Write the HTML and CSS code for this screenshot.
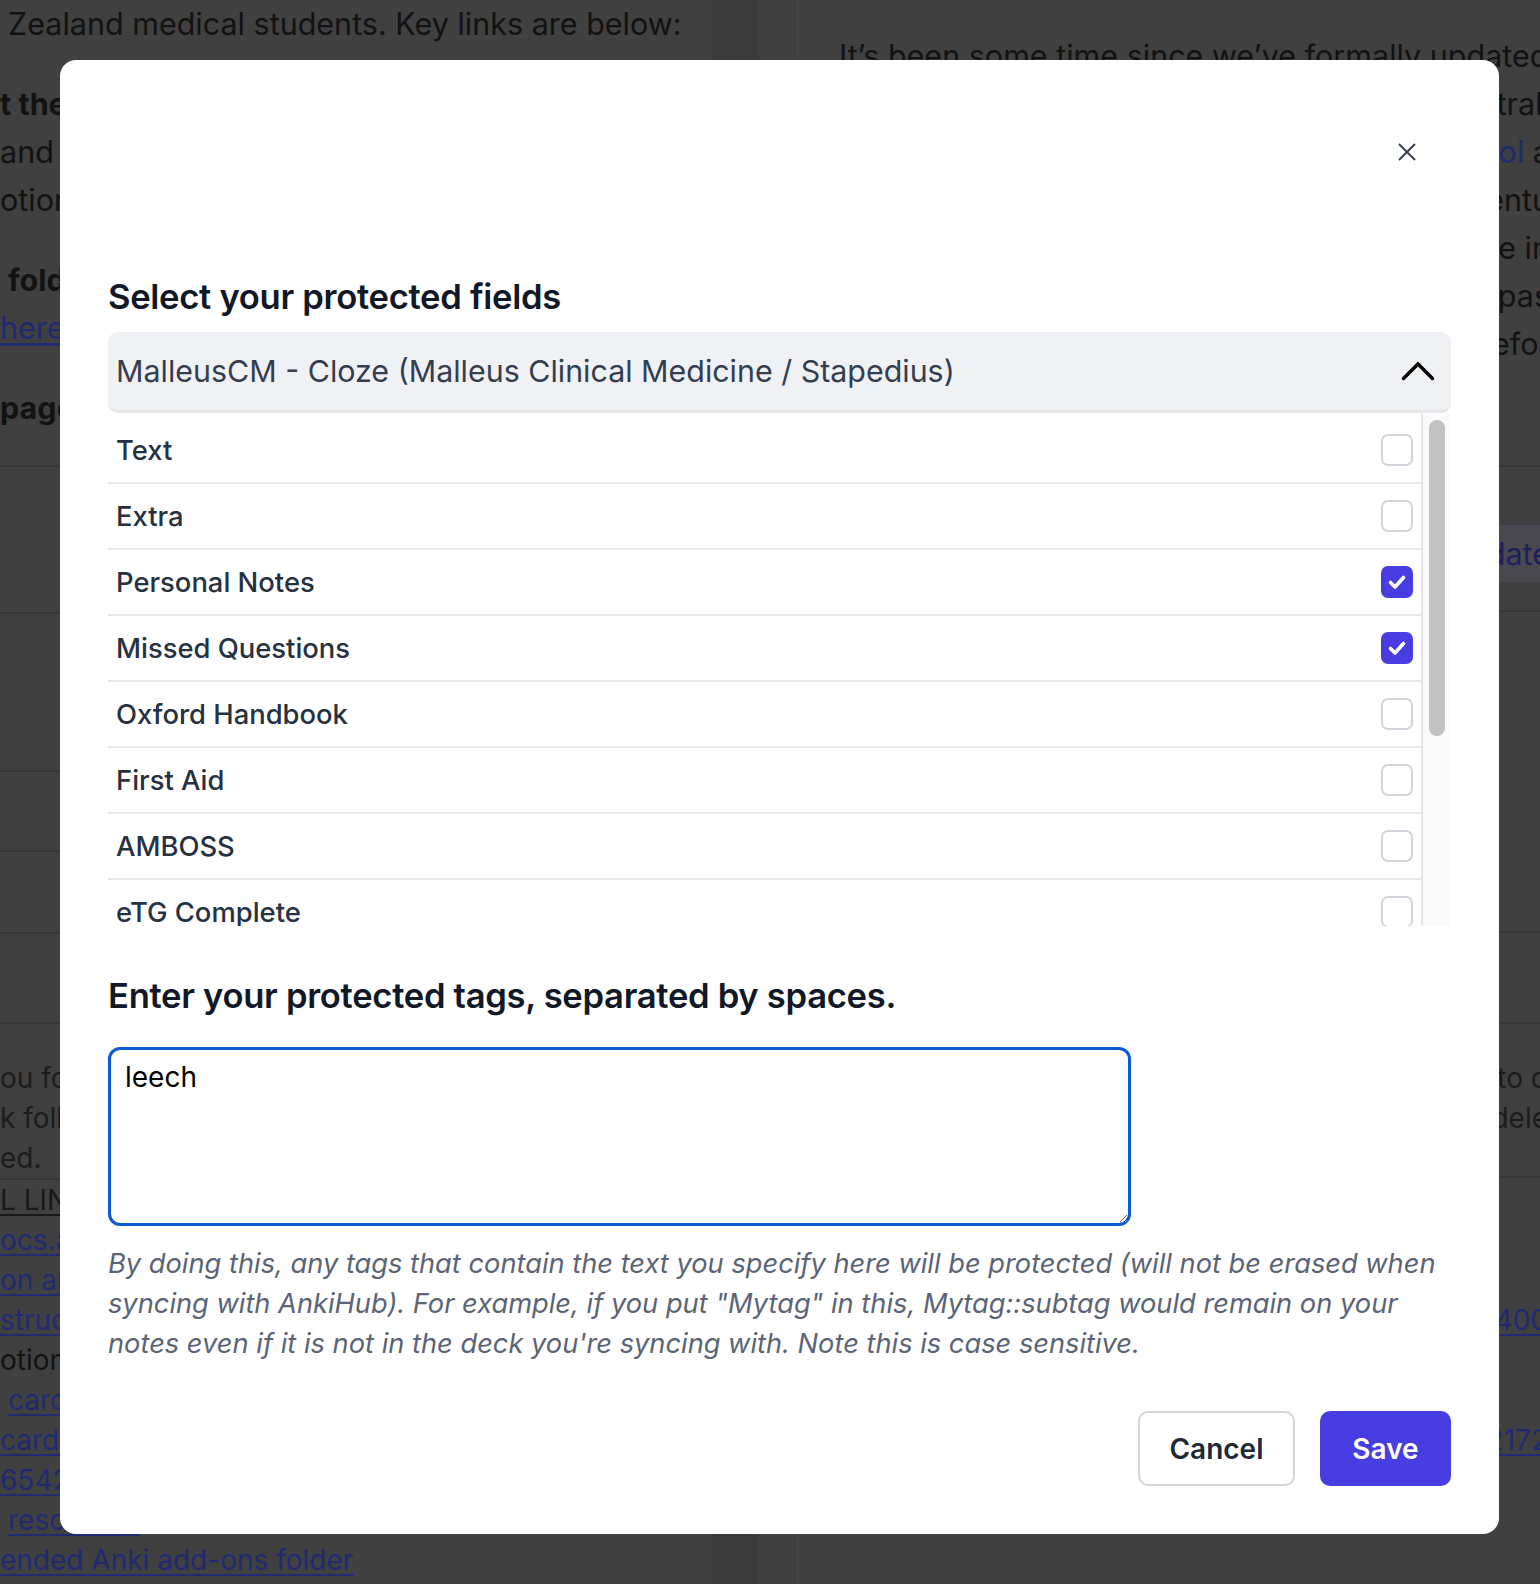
FILE: index.html
```html
<!DOCTYPE html>
<html lang="en">
<head>
    <meta charset="UTF-8">
    <meta name="viewport" content="width=device-width, initial-scale=1.0">
    <title>AnkiHub - Protected fields</title>
    <link rel="stylesheet" href="styles.css">
</head>
<body>

<!-- page behind the dialog (dimmed) -->
<div class="page">
    <div class="col-left">
        <div class="line">Zealand medical students. Key links are below:</div>

        <div class="para">
            <div class="line"><b>t the</b> top of this page you can find the deck</div>
            <div class="line">and lists of the current maintainers</div>
            <div class="line">otional resources for students</div>
        </div>

        <div class="para">
            <div class="line indent"><b>fold</b>ers and sub-decks</div>
            <div class="line"><a href="#">here</a> is the full list</div>
        </div>

        <div class="para">
            <div class="line"><b>pag</b>e summary</div>
        </div>

        <div class="table">
            <div class="trow" style="height: 33px"></div>
            <div class="trow" style="height: 145px"></div>
            <div class="trow" style="height: 156px"></div>
            <div class="trow" style="height: 78px"></div>
            <div class="trow" style="height: 80px"></div>
            <div class="trow" style="height: 88px"></div>
            <div class="trow small">
                <div class="sline">ou for using the deck</div>
                <div class="sline">k following the steps</div>
                <div class="sline">ed.</div>
            </div>
            <div class="links">
                <div class="sline"><a class="dark" href="#">L LINKS</a></div>
                <div class="sline"><a href="#">ocs.ankihub.net</a></div>
                <div class="sline"><a href="#">on and setup</a></div>
                <div class="sline"><a href="#">structions</a></div>
                <div class="sline">otional</div>
                <div class="sline indent"><a href="#">card types</a></div>
                <div class="sline"><a href="#">card options</a></div>
                <div class="sline"><a href="#">6542</a></div>
                <div class="sline indent"><a href="#">resources</a></div>
                <div class="sline"><a href="#">ended Anki add-ons folder</a></div>
            </div>
        </div>
    </div>

    <div class="col-strip"></div>

    <div class="col-right">
        <div class="line">It’s been some time since we’ve formally updated the community</div>
        <div class="line tail">bodies across Australi</div>
        <div class="line tail">the <a class="plain" href="#">protocol</a> a</div>
        <div class="line tail">eventu</div>
        <div class="line tail">the in</div>
        <div class="line tail">pas</div>
        <div class="line tail">befor</div>

        <div class="table">
            <div class="trow" style="height: 97px"></div>
            <div class="trow btn-row"><span class="ghost-btn">Update</span></div>
            <div class="trow" style="height: 319px"></div>
            <div class="trow" style="height: 89px"></div>
            <div class="trow small tail-rows">
                <div class="sline">to d</div>
                <div class="sline">dele</div>
            </div>
            <div class="tail-links">
                <div class="sline"><a href="#">400</a></div>
                <div class="sline"><a href="#">2172</a></div>
            </div>
        </div>
    </div>
</div>

<!-- dialog -->
<div class="modal" role="dialog">
    <div class="modal-header">
        <button class="close-btn" aria-label="Close">
            <svg viewBox="0 0 20 20" width="20" height="20">
                <path d="M2 2L18 18M18 2L2 18" stroke="#374151" stroke-width="2" fill="none"/>
            </svg>
        </button>
    </div>

    <div class="modal-body">
        <h2 class="section-title">Select your protected fields</h2>

        <div class="accordion">
            <div class="accordion-head">
                <span>MalleusCM - Cloze (Malleus Clinical Medicine / Stapedius)</span>
                <svg class="chevron" viewBox="0 0 34 20" width="34" height="20">
                    <path d="M2.5 17.5L17 3L31.5 17.5" stroke="#000" stroke-width="3.4" fill="none" stroke-linecap="round"/>
                </svg>
            </div>

            <div class="field-scroll">
                <ul class="field-list">
                    <li class="field-row"><span>Text</span><span class="check"></span></li>
                    <li class="field-row"><span>Extra</span><span class="check"></span></li>
                    <li class="field-row"><span>Personal Notes</span>
                        <span class="check checked"><svg viewBox="0 0 32 32" width="32" height="32"><path d="M9.5 16.5L14 21L22.5 11.5" stroke="#fff" stroke-width="3.6" fill="none" stroke-linecap="round" stroke-linejoin="round"/></svg></span>
                    </li>
                    <li class="field-row"><span>Missed Questions</span>
                        <span class="check checked"><svg viewBox="0 0 32 32" width="32" height="32"><path d="M9.5 16.5L14 21L22.5 11.5" stroke="#fff" stroke-width="3.6" fill="none" stroke-linecap="round" stroke-linejoin="round"/></svg></span>
                    </li>
                    <li class="field-row"><span>Oxford Handbook</span><span class="check"></span></li>
                    <li class="field-row"><span>First Aid</span><span class="check"></span></li>
                    <li class="field-row"><span>AMBOSS</span><span class="check"></span></li>
                    <li class="field-row"><span>eTG Complete</span><span class="check"></span></li>
                    <li class="field-row"><span>Images</span><span class="check"></span></li>
                    <li class="field-row"><span>Sources</span><span class="check"></span></li>
                    <li class="field-row"><span>Related Notes</span><span class="check"></span></li>
                    <li class="field-row"><span>Additional Resources</span><span class="check"></span></li>
                </ul>
                <div class="scrollbar"><div class="scrollbar-thumb"></div></div>
            </div>
        </div>

        <h2 class="section-title tags-title">Enter your protected tags, separated by spaces.</h2>

        <textarea class="tags-input">leech</textarea>

        <p class="help">By doing this, any tags that contain the text you specify here will be protected (will not be erased when syncing with AnkiHub). For example, if you put "Mytag" in this, Mytag::subtag would remain on your notes even if it is not in the deck you're syncing with. Note this is case sensitive.</p>

        <div class="actions">
            <button class="btn btn-cancel">Cancel</button>
            <button class="btn btn-save">Save</button>
        </div>
    </div>
</div>

</body>
</html>
```

FILE: styles.css
```css
body {
    margin: 0;
    height: 1584px;
    overflow: hidden;
    background-color: #404040;
    font-family: Inter, "Liberation Sans", sans-serif;
}

/* dimmed page behind the dialog */
.page {
    display: flex;
    height: 1584px;
    color: #121212;
    font-size: 30.5px;
}

.page a {
    color: #1f2a70;
    text-decoration: underline;
    text-underline-offset: 4px;
}

.page a.dark {
    color: #181818;
}

.page a.plain {
    text-decoration: none;
}

.line {
    height: 48px;
    line-height: 48px;
    white-space: nowrap;
}

.para {
    margin-top: 32px;
}

.indent {
    padding-left: 8px;
}

.col-left {
    width: 712px;
    flex: none;
    overflow: hidden;
}

.col-left > .line:first-child {
    padding-left: 8px;
}

.col-strip {
    width: 85px;
    flex: none;
    background: linear-gradient(to right, #3a3a3a 0 47px, #404040 47px);
    border-right: 1px solid #474747;
}

.col-right {
    flex: 1;
    overflow: hidden;
    padding-left: 41px;
    padding-top: 32px;
}

.col-right .tail {
    text-align: right;
    margin-right: -10px;
}

.trow {
    border-bottom: 2px solid #383838;
}

.sline {
    height: 40px;
    line-height: 40px;
    font-size: 28px;
    white-space: nowrap;
}

.small {
    padding-top: 34px;
    color: #1c1c1c;
}

.btn-row {
    height: 145px;
    display: flex;
    align-items: flex-start;
    justify-content: flex-end;
    padding-top: 58px;
    box-sizing: border-box;
}

.ghost-btn {
    background-color: #48484e;
    color: #1d1f5c;
    height: 57px;
    line-height: 57px;
    padding: 0 30px;
    margin-right: -40px;
}

.tail-rows {
    padding-bottom: 38px;
}

.tail-rows, .tail-links {
    text-align: right;
    margin-right: -8px;
}

.tail-links {
    padding-top: 122px;
}

.tail-links .sline {
    height: 120px;
    line-height: 40px;
}

/* dialog */
.modal {
    position: fixed;
    top: 60px;
    left: 60px;
    width: 1439px;
    background-color: #fff;
    border-radius: 16px;
    display: flex;
    flex-direction: column;
}

.modal-header {
    display: flex;
    justify-content: flex-end;
    padding: 72px 72px 0 48px;
}

.close-btn {
    width: 40px;
    height: 40px;
    padding: 0;
    border: none;
    background: none;
    display: flex;
    align-items: center;
    justify-content: center;
    cursor: pointer;
}

.modal-body {
    padding: 102px 48px 48px;
}

.section-title {
    margin: 0;
    height: 44px;
    line-height: 44px;
    font-size: 34.6px;
    font-weight: 600;
    color: #111827;
    letter-spacing: -0.3px;
}

.accordion {
    margin-top: 14px;
}

.accordion-head {
    height: 78px;
    display: flex;
    align-items: center;
    justify-content: space-between;
    padding: 0 16px 0 8px;
    background-color: #f0f1f5;
    border-bottom: 3px solid #e4e6ea;
    border-radius: 10px;
    font-size: 30.4px;
    color: #343e4f;
}

.chevron {
    display: block;
}

.field-scroll {
    display: flex;
    height: 512px;
    margin-top: 1px;
}

.field-list {
    flex: 1;
    list-style: none;
    margin: 0;
    padding: 4px 0 0;
    overflow: hidden;
}

.scrollbar {
    width: 30px;
    flex: none;
    box-sizing: border-box;
    padding: 6px 6px 0;
    background-color: #fafafa;
    border-left: 2px solid #e6e6e6;
}

.scrollbar-thumb {
    height: 316px;
    border-radius: 8px;
    background-color: #c1c1c1;
}

.field-row {
    height: 64px;
    display: flex;
    align-items: center;
    justify-content: space-between;
    padding: 0 8px;
    border-bottom: 2px solid #e5e7eb;
    font-size: 27.4px;
    font-weight: 500;
    color: #263142;
}

.check {
    width: 32px;
    height: 32px;
    box-sizing: border-box;
    border: 2px solid #d1d5db;
    border-radius: 7px;
    display: flex;
}

.check.checked {
    border: none;
    background-color: #473de0;
}

.tags-title {
    margin-top: 47px;
}

.tags-input {
    display: block;
    margin-top: 30px;
    width: 1023px;
    height: 179px;
    box-sizing: border-box;
    border: 3px solid #0a5bd6;
    border-radius: 12px;
    padding: 10px 14px;
    font-family: Inter, "Liberation Sans", sans-serif;
    font-size: 28px;
    color: #000;
    outline: none;
}

.help {
    margin: 18px 0 0;
    font-size: 27.25px;
    line-height: 40px;
    font-style: italic;
    color: #5b6476;
}

.actions {
    margin-top: 47px;
    display: flex;
    justify-content: flex-end;
    gap: 25px;
}

.btn {
    height: 75px;
    border-radius: 10px;
    font-family: Inter, "Liberation Sans", sans-serif;
    font-size: 28px;
    font-weight: 600;
    cursor: pointer;
}

.btn-cancel {
    width: 157px;
    background-color: #fff;
    border: 2px solid #d1d5db;
    color: #1f2937;
}

.btn-save {
    width: 131px;
    background-color: #473de0;
    border: none;
    color: #fff;
}
```
